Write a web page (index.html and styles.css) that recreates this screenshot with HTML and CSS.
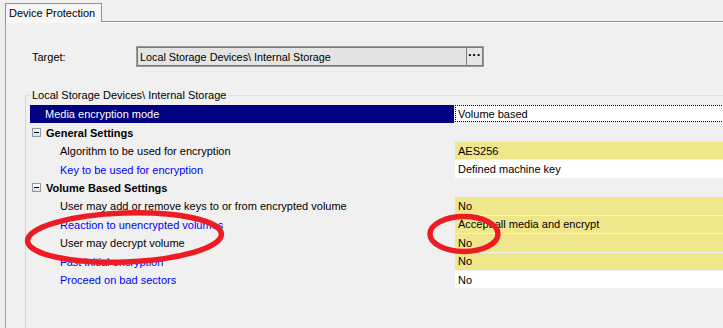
FILE: index.html
```html
<!doctype html>
<html lang="en">
  <head>
    <meta charset="UTF-8" />
    <title>Device Protection</title>
    <link rel="stylesheet" href="styles.css">
  </head>
  <body>
    <div class="tabs">
      <div class="tab">Device Protection</div>
    </div>

    <div class="panel">
      <div class="target-row">
        <span class="target-label">Target:</span>
        <div class="target-box">
          <span class="target-text">Local Storage Devices\ Internal Storage</span>
          <span class="browse-btn">&middot;&middot;&middot;</span>
        </div>
      </div>

      <fieldset class="group">
        <legend>Local Storage Devices\ Internal Storage</legend>
        <div class="props">
          <div class="name selected">Media encryption mode</div>
          <div class="value white focus">Volume based</div>

          <div class="name header"><span class="minus"></span>General Settings</div>
          <div class="value"></div>

          <div class="name item">Algorithm to be used for encryption</div>
          <div class="value yellow">AES256</div>

          <div class="name item link">Key to be used for encryption</div>
          <div class="value white">Defined machine key</div>

          <div class="name header"><span class="minus"></span>Volume Based Settings</div>
          <div class="value"></div>

          <div class="name item">User may add or remove keys to or from encrypted volume</div>
          <div class="value yellow">No</div>

          <div class="name item link">Reaction to unencrypted volumes</div>
          <div class="value yellow">Accept all media and encrypt</div>

          <div class="name item">User may decrypt volume</div>
          <div class="value yellow">No</div>

          <div class="name item link">Fast initial encryption</div>
          <div class="value yellow">No</div>

          <div class="name item link">Proceed on bad sectors</div>
          <div class="value white">No</div>
        </div>
      </fieldset>
    </div>

    <!-- hand-drawn marks over the screenshot -->
    <svg class="marks" width="723" height="328" viewBox="0 0 723 328">
      <ellipse cx="124.5" cy="237.5" rx="97" ry="24.5" transform="rotate(-2 124.5 237.5)" />
      <ellipse cx="464" cy="234" rx="34" ry="17.5" />
    </svg>
  </body>
</html>
```

FILE: styles.css
```css
body {
  margin: 0;
  height: 328px;
  overflow: hidden;
  background: #f0f0f0;
  font-family: 'Liberation Sans', Arial, sans-serif;
  font-size: 11px;
  color: #000;
  position: relative;
}

.tabs {
  padding: 3px 0 0 5px;
  height: 18px;
}

.tab {
  display: inline-block;
  position: relative;
  z-index: 1;
  height: 18px;
  line-height: 18px;
  padding: 0 6px 0 3px;
  border: 1px solid #8d8f93;
  border-bottom: none;
  background: #f6f6f6;
}

.panel {
  margin-left: 5px;
  border-top: 1px solid #8d8f93;
  border-left: 1px solid #a0a0a0;
  box-shadow: inset 0 1px 0 #fafafa;
  height: 400px;
}

.target-row {
  display: flex;
  align-items: center;
  padding: 25px 0 0 26px;
}

.target-label {
  width: 105px;
}

.target-box {
  display: flex;
  align-items: center;
  width: 344px;
  height: 17px;
  border: 1px solid #7a7a7a;
  box-shadow: 0 0 0 1px #9a9a9a;
  background: #e4e4e4;
}

.target-text {
  flex: 1;
  padding-left: 2px;
  font-size: 10.8px;
}

.browse-btn {
  width: 16px;
  height: 17px;
  line-height: 13px;
  text-align: center;
  font-weight: bold;
  font-size: 13px;
  border-left: 1px solid #7a7a7a;
  background: #e6e6e6;
  box-sizing: border-box;
}

.group {
  margin: 23px 0 0 19px;
  padding: 0;
  width: 800px;
  height: 300px;
  border: none;
  border-top: 1px solid #d8e0e6;
  border-left: 1px solid #d5d5d5;
}

.group legend {
  margin-left: 5px;
  padding: 0 2px 0 1px;
  line-height: 13px;
}

.props {
  display: grid;
  grid-template-columns: 424px 1fr;
  grid-auto-rows: 18.45px;
  column-gap: 1px;
  margin: 3px 0 0 4px;
}

.name,
.value {
  display: flex;
  align-items: center;
  white-space: nowrap;
}

.name.selected {
  background: #000080;
  color: #fff;
  padding-left: 15px;
}

.name.header {
  font-weight: bold;
  padding-left: 2px;
}

.name.item {
  padding-left: 30px;
}

.name.link {
  color: #0000ff;
}

.minus {
  position: relative;
  width: 9px;
  height: 9px;
  margin-right: 5px;
  box-sizing: border-box;
  border: 1px solid #8e9aa6;
  background: linear-gradient(#ffffff, #dcdcdc);
}

.minus::after {
  content: '';
  position: absolute;
  left: 1px;
  right: 1px;
  top: 3px;
  height: 1px;
  background: #000;
}

.value {
  padding-left: 3px;
  margin-bottom: 1px;
}

.value.white {
  background: #fff;
}

.value.yellow {
  background: #f0e68c;
}

.value.focus {
  outline: 1px dotted #000;
  outline-offset: -1px;
}

.marks {
  position: absolute;
  left: 0;
  top: 0;
  pointer-events: none;
}

.marks ellipse {
  fill: none;
  stroke: #ed1c24;
  stroke-width: 5.5;
}
```
